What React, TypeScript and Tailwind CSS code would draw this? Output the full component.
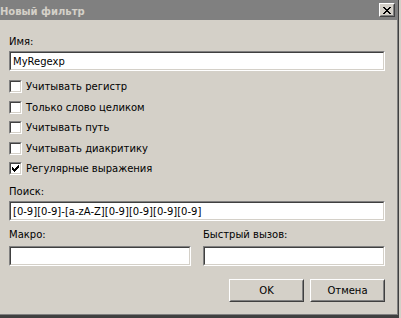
import React from "react";

function Sunken({ children, className = "" }: { children?: React.ReactNode; className?: string }) {
  return (
    <div className={"border border-t-[#808080] border-l-[#808080] border-b-white border-r-white " + className}>
      <div className="h-full border border-t-[#404040] border-l-[#404040] border-b-[#d4d0c8] border-r-[#d4d0c8] bg-white flex items-center pl-[2px] overflow-hidden whitespace-nowrap">
        {children}
      </div>
    </div>
  );
}

function Raised({ children, className = "" }: { children?: React.ReactNode; className?: string }) {
  return (
    <div className={"border border-t-white border-l-white border-b-[#404040] border-r-[#404040] " + className}>
      <div className="h-full border border-t-[#d4d0c8] border-l-[#d4d0c8] border-b-[#808080] border-r-[#808080] bg-[#d4d0c8] flex items-center justify-center">
        {children}
      </div>
    </div>
  );
}

const checkPixels: [number, number][] = [
  [6, 0],
  [5, 1], [6, 1],
  [0, 2], [4, 2], [5, 2], [6, 2],
  [0, 3], [1, 3], [3, 3], [4, 3], [5, 3],
  [0, 4], [1, 4], [2, 4], [3, 4], [4, 4],
  [1, 5], [2, 5], [3, 5],
  [2, 6],
];

const xPixels: [number, number][] = [
  [0, 0], [1, 0], [6, 0], [7, 0],
  [1, 1], [2, 1], [5, 1], [6, 1],
  [2, 2], [3, 2], [4, 2], [5, 2],
  [3, 3], [4, 3],
  [2, 4], [3, 4], [4, 4], [5, 4],
  [1, 5], [2, 5], [5, 5], [6, 5],
  [0, 6], [1, 6], [6, 6], [7, 6],
];

function Checkbox({ label, checked }: { label: string; checked?: boolean }) {
  return (
    <div className="h-[13px] flex items-center gap-[4px]">
      <div className="w-[13px] h-[13px] border border-t-[#808080] border-l-[#808080] border-b-white border-r-white shrink-0">
        <div className="w-full h-full border border-t-[#404040] border-l-[#404040] border-b-[#d4d0c8] border-r-[#d4d0c8] bg-white flex items-center justify-center">
          {checked && (
            <svg width="7" height="7" viewBox="0 0 7 7" shapeRendering="crispEdges">
              {checkPixels.map(([x, y], i) => (
                <rect key={i} x={x} y={y} width="1" height="1" fill="#000" />
              ))}
            </svg>
          )}
        </div>
      </div>
      <span>{label}</span>
    </div>
  );
}

export default function App() {
  return (
    <div className="w-[401px] h-[318px] bg-[#d4d0c8] overflow-hidden font-['DejaVu_Sans',sans-serif] text-[10px] leading-[13px] text-black">
      <div className="w-[399px] h-[318px] border-r border-b-[3px] border-[#404040]">
        <div className="h-full border-r border-b border-[#808080] flex flex-col">
          <div className="h-[20px] bg-[#808080] flex justify-between shrink-0">
            <span className="pt-[5px] font-bold text-[#d4d0c8] whitespace-nowrap">Новый фильтр</span>
            <Raised className="w-[16px] h-[14px] mt-[3px] mr-[2px]">
              <svg width="8" height="7" viewBox="0 0 8 7" shapeRendering="crispEdges">
                {xPixels.map(([x, y], i) => (
                  <rect key={i} x={x} y={y} width="1" height="1" fill="#000" />
                ))}
              </svg>
            </Raised>
          </div>

          <div className="flex flex-col pl-[9px] pr-[12px]">
            <div className="mt-[15px]">Имя:</div>
            <Sunken className="mt-[3px] h-[20px]">MyRegexp</Sunken>

            <div className="mt-[9px] flex flex-col gap-[7.5px]">
              <Checkbox label="Учитывать регистр" />
              <Checkbox label="Только слово целиком" />
              <Checkbox label="Учитывать путь" />
              <Checkbox label="Учитывать диакритику" />
              <Checkbox label="Регулярные выражения" checked />
            </div>

            <div className="mt-[10px]">Поиск:</div>
            <Sunken className="mt-[3px] h-[20px]">[0-9][0-9]-[a-zA-Z][0-9][0-9][0-9][0-9]</Sunken>

            <div className="mt-[7px] grid grid-cols-2 gap-x-[12px]">
              <div className="flex flex-col">
                <div>Макро:</div>
                <Sunken className="mt-[5px] h-[20px]" />
              </div>
              <div className="flex flex-col">
                <div>Быстрый вызов:</div>
                <Sunken className="mt-[5px] h-[20px]" />
              </div>
            </div>

            <div className="mt-[13px] flex justify-end gap-[6px]">
              <Raised className="w-[75px] h-[23px]">OK</Raised>
              <Raised className="w-[75px] h-[23px]">Отмена</Raised>
            </div>
          </div>
        </div>
      </div>
    </div>
  );
}
